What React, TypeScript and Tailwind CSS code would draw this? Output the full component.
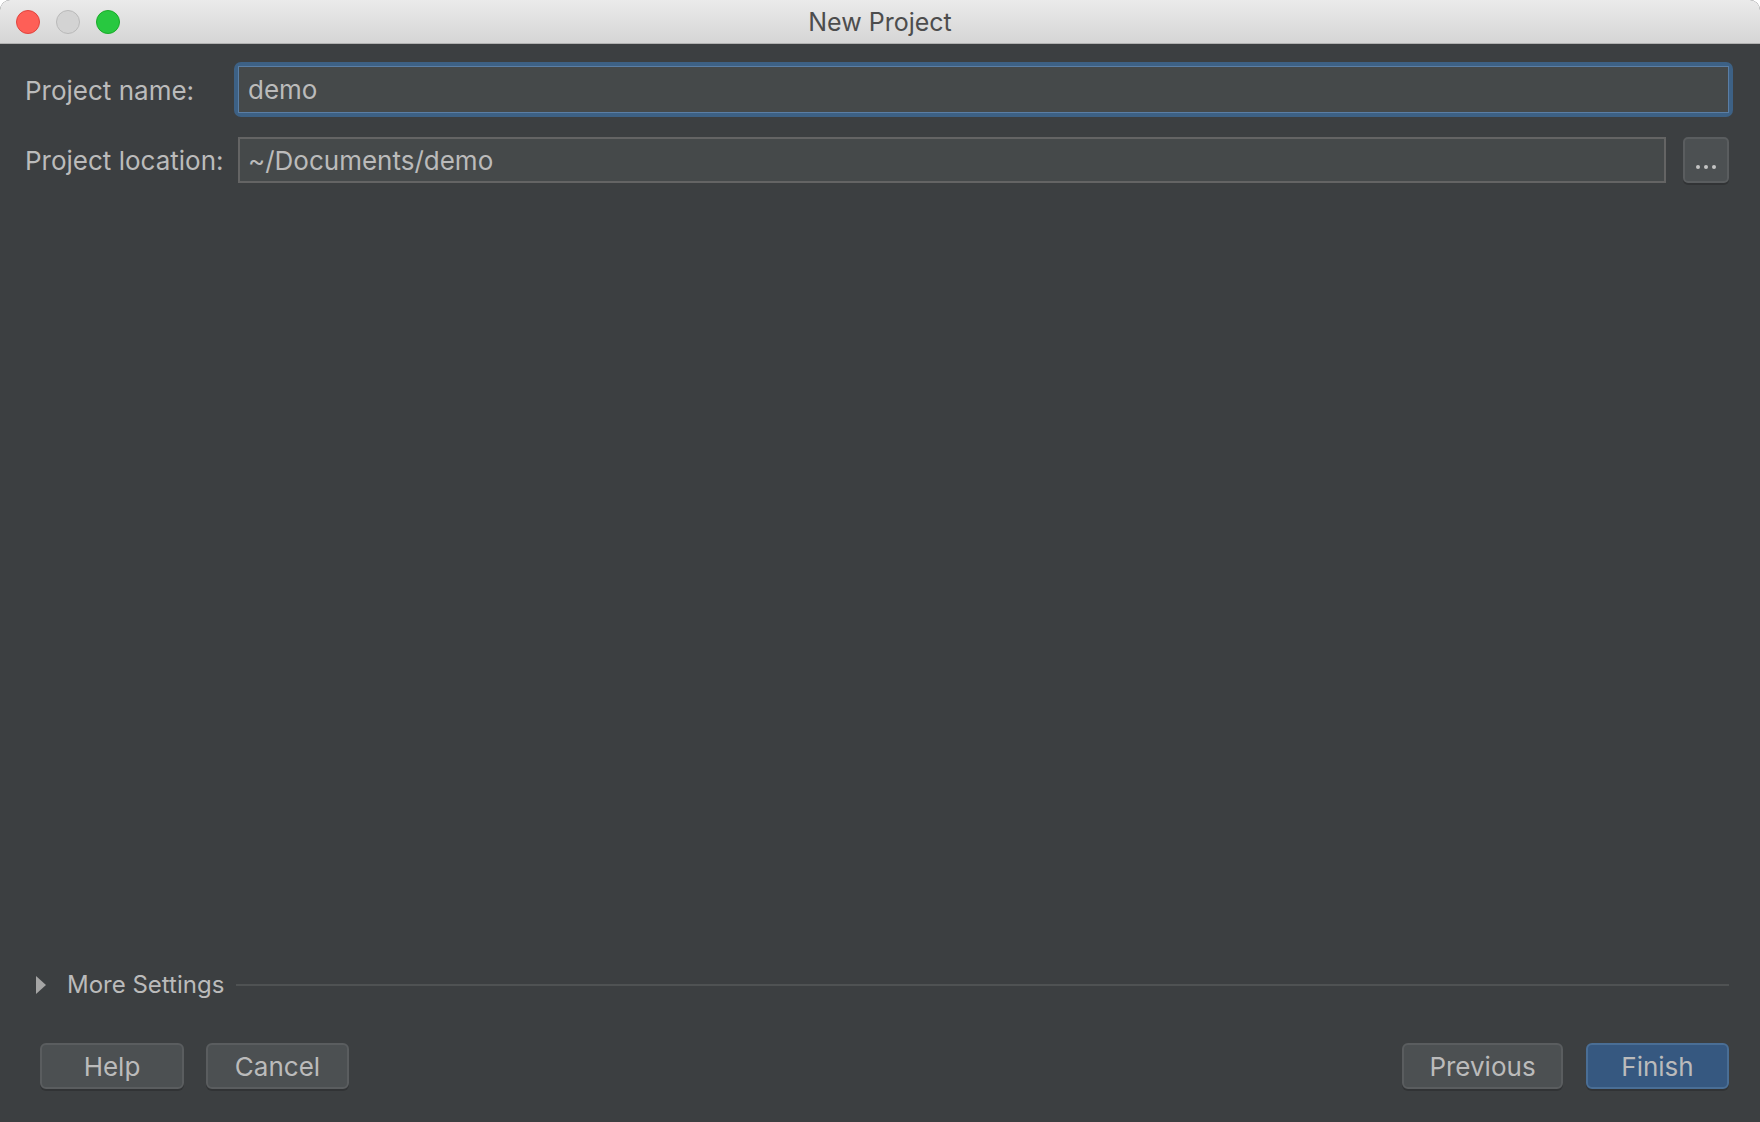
import { useState } from "react"

function TrafficLights() {
  return (
    <div className="flex items-center gap-[16px] pl-[16px]">
      <span className="h-[24px] w-[24px] rounded-full border border-[#e0443e] bg-[#fe5f57]" />
      <span className="h-[24px] w-[24px] rounded-full border border-[#b9b9b9] bg-[#d3d3d3]" />
      <span className="h-[24px] w-[24px] rounded-full border border-[#1aab29] bg-[#28c840]" />
    </div>
  )
}

function DialogButton({ label, width, primary = false }: { label: string; width: string; primary?: boolean }) {
  return (
    <button
      className={`h-[46px] ${width} rounded-[6px] border-2 text-[26px] text-[#bbbbbb] shadow-[0_2px_0_rgba(0,0,0,0.18)] ${
        primary ? "border-[#4a6e95] bg-[#365880]" : "border-[#5a5d5f] bg-[#4c5052]"
      }`}
    >
      {label}
    </button>
  )
}

export default function App() {
  const [name, setName] = useState("demo")
  const [location, setLocation] = useState("~/Documents/demo")

  return (
    <div
      className="flex h-[1122px] w-[1760px] flex-col overflow-hidden rounded-t-[10px] bg-[#3c3f41]"
      style={{ fontFamily: '"Inter", "Noto Sans", sans-serif' }}
    >
      <div className="relative flex h-[44px] shrink-0 items-center border-b border-[#b1b1b1] bg-gradient-to-b from-[#ebebeb] to-[#d5d5d5]">
        <TrafficLights />
        <div className="absolute inset-0 flex items-center justify-center pt-[3px] text-[25px] text-[#4d4d4d]">New Project</div>
      </div>

      <div className="flex flex-1 flex-col pl-[25px] pr-[31px] pt-[22px] pb-[33px]">
        <div className="grid grid-cols-[196px_1fr_46px] items-center gap-x-[17px] gap-y-[24px]">
          <label className="whitespace-nowrap pt-[1px] text-[26px] text-[#bbbbbb]">Project name:</label>
          <div className="col-span-2 rounded-[3px] shadow-[0_0_0_4px_#3d6185]">
            <input
              value={name}
              onChange={(e) => setName(e.target.value)}
              className="block h-[47px] w-full border border-[#5a7ea5] bg-[#45494a] px-[9px] text-[26px] text-[#bbbbbb] outline-none"
            />
          </div>

          <label className="whitespace-nowrap pt-[1px] text-[26px] text-[#bbbbbb]">Project location:</label>
          <input
            value={location}
            onChange={(e) => setLocation(e.target.value)}
            className="block h-[46px] w-full border-2 border-[#646464] bg-[#45494a] px-[8px] text-[26px] text-[#bbbbbb] outline-none"
          />
          <button className="flex h-[46px] w-[46px] items-end justify-center gap-[4px] rounded-[5px] border-2 border-[#5a5d5f] bg-[#4c5052] pb-[12px] shadow-[0_2px_0_rgba(0,0,0,0.18)]">
            <span className="h-[4px] w-[4px] rounded-full bg-[#c4c4c4]" />
            <span className="h-[4px] w-[4px] rounded-full bg-[#c4c4c4]" />
            <span className="h-[4px] w-[4px] rounded-full bg-[#c4c4c4]" />
          </button>
        </div>

        <div className="flex-1" />

        <div className="flex items-center pl-[11px]">
          <svg width="10" height="18" viewBox="0 0 10 18" className="shrink-0">
            <path d="M0 0 L10 9 L0 18 Z" fill="#a5a5a5" />
          </svg>
          <span className="ml-[21px] text-[24px] text-[#bbbbbb]">More Settings</span>
          <div className="ml-[12px] h-[2px] flex-1 bg-[#4f5253]" />
        </div>

        <div className="mt-[40px] flex items-center pl-[15px]">
          <DialogButton label="Help" width="w-[144px]" />
          <div className="ml-[22px]">
            <DialogButton label="Cancel" width="w-[143px]" />
          </div>
          <div className="flex-1" />
          <DialogButton label="Previous" width="w-[161px]" />
          <div className="ml-[23px]">
            <DialogButton label="Finish" width="w-[143px]" primary />
          </div>
        </div>
      </div>
    </div>
  )
}
